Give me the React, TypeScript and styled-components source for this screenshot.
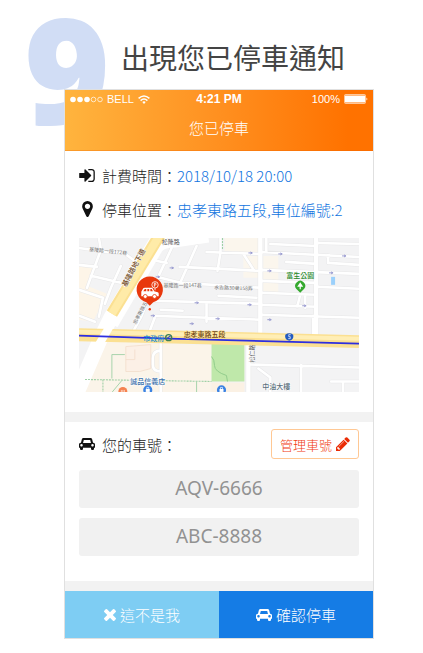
import React from "react";
import styled, { createGlobalStyle } from "styled-components";

const cjk = `"Noto Sans CJK TC", sans-serif`;
const latin = `"Noto Sans", "Noto Sans CJK TC", sans-serif`;

const GlobalStyle = createGlobalStyle`
  *, *::before, *::after { box-sizing: border-box; }
  body { margin: 0; background: #fff; color: #222; font-family: ${cjk}; font-weight: 300; }
  button { font-family: inherit; font-weight: inherit; cursor: pointer; }
`;

const Page = styled.main`
  padding: 0 49px 14px 64px;
`;

const Intro = styled.header`
  position: relative;
  display: flex;
  align-items: flex-end;
  height: 89px;
  padding: 0 0 11px 57px;
`;

const StepNumber = styled.span`
  position: absolute;
  left: -40px;
  top: -4px;
  font: 800 147px/145px "Open Sans", sans-serif;
  color: #d1ddf5;
`;

const Title = styled.h1`
  position: relative;
  margin: 0;
  font-size: 28px;
  line-height: 42px;
  font-weight: 400;
  color: #444;
  white-space: nowrap;
`;

const Phone = styled.section`
  position: relative;
  border: 1px solid #e0e0e0;
  background: #fff;
`;

const TopBar = styled.div`
  height: 61px;
  color: #fff;
  background: linear-gradient(90deg, #ffb43e, #ff9020 50%, #ff7200 92%);
  border-bottom: 1px solid rgba(240, 100, 0, 0.3);
`;

const StatusBar = styled.div`
  display: grid;
  grid-template-columns: 1fr auto 1fr;
  align-items: center;
  height: 18px;
  padding: 0 5px;
  font: 11px/18px "Liberation Sans", sans-serif;
`;

const StatusGroup = styled.div<{ $end?: boolean }>`
  display: flex;
  align-items: center;
  justify-content: ${(p) => (p.$end ? "flex-end" : "flex-start")};
  gap: 4px;
`;

const Clock = styled.time`
  font-size: 12px;
  font-weight: 700;
`;

const BarTitle = styled.h2`
  margin: 0;
  padding-top: 8px;
  font-size: 15px;
  line-height: 24px;
  font-weight: inherit;
  text-align: center;
`;

const Details = styled.div`
  padding: 7px 14px 20px;
`;

const InfoList = styled.dl`
  margin: 0 0 12px;
`;

const InfoRow = styled.div`
  display: flex;
  align-items: center;
  height: 34px;
  font-size: 15px;
  white-space: nowrap;
`;

const IconSlot = styled.span`
  display: flex;
  justify-content: center;
  width: 16px;
  margin-right: 7px;
  color: #111;
`;

const Label = styled.dt``;

const Value = styled.dd`
  margin: 0;
  color: #0f74e0;
`;

const MapView = styled.svg`
  display: block;
  width: 100%;
  height: auto;
  font-family: ${cjk};
`;

const Divider = styled.div`
  height: 10px;
  background: #f2f2f2;
`;

const Vehicles = styled.div`
  padding: 7px 14px 25px;
`;

const VehicleHead = styled.div`
  display: flex;
  align-items: center;
  margin-bottom: 11px;
`;

const VehicleTitle = styled.h3`
  flex: 1;
  margin: 0;
  font-size: 15px;
  font-weight: inherit;
`;

const ManageButton = styled.button`
  display: flex;
  align-items: center;
  gap: 4px;
  height: 30px;
  padding: 0 8px;
  border: 1px solid #ffc894;
  border-radius: 3px;
  background: #fff;
  color: #f03a10;
  font-size: 13px;
`;

const PlateList = styled.div`
  display: grid;
  gap: 10px;
`;

const Plate = styled.button`
  height: 38px;
  padding: 0 0 2px;
  border: 0;
  border-radius: 3px;
  background: #f1f1f1;
  color: #929292;
  font-size: 19px;
  line-height: 24px;
  font-weight: 400;
  font-family: ${latin};
`;

const Actions = styled.div`
  display: grid;
  grid-template-columns: 1fr 1fr;
`;

const ActionButton = styled.button<{ $primary?: boolean }>`
  display: flex;
  align-items: center;
  justify-content: center;
  gap: 4px;
  height: 47px;
  padding: 0;
  border: 0;
  background: ${(p) => (p.$primary ? "#157ce5" : "#7ecdf3")};
  color: #fff;
  font-size: 15px;
`;

const icons = {
  signIn: {
    box: "128 256 1536 1280",
    w: 16,
    h: 13,
    d: "M1312 896q0 26-19 45l-544 544q-19 19-45 19t-45-19-19-45v-288h-448q-26 0-45-19t-19-45v-384q0-26 19-45t45-19h448v-288q0-26 19-45t45-19 45 19l544 544q19 19 19 45zm352-352v704q0 119-84.500 203.500t-203.500 84.500h-320q-13 0-22.500-9.500t-9.500-22.500q0-4-1-20t-.5-26.500 3-23.500 10-19.500 20.500-6.500h320q66 0 113-47t47-113v-704q0-66-47-113t-113-47h-312l-11.500-1-11.500-3-8-5.500-7-9-2-13.500q0-4-1-20t-.5-26.500 3-23.500 10-19.500 20.500-6.500h320q119 0 203.500 84.500t84.500 203.500z",
  },
  marker: {
    box: "384 128 1024 1536",
    w: 11,
    h: 16,
    d: "M1152 640q0-106-75-181t-181-75-181 75-75 181 75 181 181 75 181-75 75-181zm256 0q0 109-33 179l-364 774q-16 33-47.500 52t-67.500 19-67.500-19-46.500-52l-365-774q-33-70-33-179 0-212 150-362t362-150 362 150 150 362z",
  },
  car: {
    box: "0 0 2048 1536",
    w: 16,
    h: 12,
    d: "M480 928q0-66-47-113t-113-47-113 47-47 113 47 113 113 47 113-47 47-113zm36-288h1016l-89-357q-2-8-14-17.5t-21-9.500h-768q-9 0-21 9.500t-14 17.500zm1372 288q0-66-47-113t-113-47-113 47-47 113 47 113 113 47 113-47 47-113zm160-96v384q0 14-9 23t-23 9h-96v128q0 80-56 136t-136 56-136-56-56-136v-128h-1024v128q0 80-56 136t-136 56-136-56-56-136v-128h-96q-14 0-23-9t-9-23v-384q0-93 65.500-158.500t158.500-65.500h28l105-419q23-94 104-157.500t179-63.500h768q98 0 179 63.500t104 157.500l105 419h28q93 0 158.500 65.500t65.500 158.500z",
  },
  pencil: {
    box: "128 128 1536 1536",
    w: 14,
    h: 14,
    d: "M491 1536l91-91-235-235-91 91v107h128v128h107zm523-928q0-22-22-22-10 0-17 7l-542 542q-7 7-7 17 0 22 22 22 10 0 17-7l542-542q7-7 7-17zm-54-192l416 416-832 832h-416v-416zm683 96q0 53-37 90l-166 166-416-416 166-165q36-38 90-38 53 0 91 38l235 234q37 39 37 91z",
  },
  times: {
    box: "302 366 1188 1188",
    w: 12,
    h: 12,
    d: "M1490 1322q0 40-28 68l-136 136q-28 28-68 28t-68-28l-294-294-294 294q-28 28-68 28t-68-28l-136-136q-28-28-28-68t28-68l294-294-294-294q-28-28-28-68t28-68l136-136q28-28 68-28t68 28l294 294 294-294q28-28 68-28t68 28l136 136q28 28 28 68t-28 68l-294 294 294 294q28 28 28 68z",
  },
};

function Icon({ name, color = "currentColor" }: { name: keyof typeof icons; color?: string }) {
  const icon = icons[name];
  return (
    <svg width={icon.w} height={icon.h} viewBox={icon.box} fill={color} aria-hidden="true">
      <path d={icon.d} />
    </svg>
  );
}

function SignalDots() {
  return (
    <svg width="33" height="7" viewBox="0 0 33 7" aria-hidden="true">
      {[3, 10, 17].map((x) => (
        <circle key={x} cx={x} cy="3.5" r="2.8" fill="#fff" />
      ))}
      {[23.5, 30].map((x) => (
        <circle key={x} cx={x} cy="3.5" r="2.3" fill="none" stroke="#fff" strokeWidth="0.7" />
      ))}
    </svg>
  );
}

function Wifi() {
  return (
    <svg width="12" height="9" viewBox="0 0 12 9" fill="none" stroke="#fff" strokeWidth="1.5" aria-hidden="true">
      <path d="M0.6 3.4Q6-1.400 11.400 3.400M2.600 5.600Q6 2.400 9.400 5.600" />
      <path d="M4.300 7L6 8.900L7.700 7Q6 5.700 4.300 7Z" fill="#fff" stroke="none" />
    </svg>
  );
}

function Battery() {
  return (
    <svg width="24" height="10" viewBox="0 0 24 10" aria-hidden="true">
      <rect x="0.5" y="0.5" width="21" height="9" rx="1" fill="none" stroke="#fff" strokeOpacity="0.6" />
      <rect x="1" y="1.500" width="20" height="7" fill="#fff" />
      <path d="M22.500 3.500Q24.200 5 22.500 6.500Z" fill="#fff" />
    </svg>
  );
}

const minorStreets = [
  "M0 10L28 14L45 15L56 23",
  "M20 0L22 12L16 28L8 50",
  "M0 27L18 29M12 38L42 45M42 28L32 50L26 66",
  "M0 52L24 60L20 79M0 78L16 84",
  "M93 10L79 40L62 80L52 98",
  "M78 39L102 45L182 50",
  "M118 8L102 44M74 22L88 25",
  "M74 63L182 66M82 72L104 73",
  "M74 78L182 82",
  "M101 29L182 33M142 0V14L139 33",
  "M128 14L182 16M165 16L176 33",
  "M140 58L178 60",
  "M128 66V84M76 80L71 93",
  "M182 14L281 19",
  "M188 0V14M192 6L238 8M238 5L281 6",
  "M182 32L281 36M208 24L238 26",
  "M182 43L238 45M182 55L238 57",
  "M182 67L238 69M182 77L281 80",
  "M238 49L281 51M250 17V25L281 27",
  "M222 57L219 69M227 57V70",
  "M235 78V98",
  "M171 127L281 130",
  "M223 128V155M253 144H281M265 145V155",
  "M180 131L192 140L192 155",
  "M82 106V155M82 113Q74 113 74 121V127Q74 134 82 134",
];

const mainStreets = ["M182 0V95", "M238 0V96", "M170 104V155"];

const oneWayArrows = [
  [93, 30], [118, 65], [172, 15], [202, 16], [191, 33], [266, 18], [253, 35],
  [226, 68], [171, 67], [74, 78], [113, 86], [139, 81], [191, 82], [79, 39],
];

function StreetMap() {
  return (
    <MapView viewBox="0 0 281 155" role="img" aria-label="停車位置地圖">
      <rect width="281" height="155" fill="#f3f3f4" />
      <path d="M0 26L15 30L8 48L28 56L14 84L0 82Z" fill="#fdf5e8" />
      <path d="M146 0H180V14H146ZM165 18H180V40H165ZM185 18H200V55H185Z" fill="#fbf6ed" />
      <path d="M26 104L133 108V155H3L14 134Z" fill="#fbf4e9" />
      <path d="M133 105L166 106V144H133Z" fill="#bfe8aa" />
      <path d="M133 119Q136 122 136 128T148 138L149 144" fill="none" stroke="#92cc8c" />
      <path d="M133 145H166V155H133Z" fill="#fbf1e4" />

      <g fill="none" strokeLinecap="round" strokeLinejoin="round">
        <path d={minorStreets.join("")} stroke="#e7e7e8" strokeWidth="3.600" />
        <path d={mainStreets.join("")} stroke="#e7e7e8" strokeWidth="5.400" />
        <path d={minorStreets.join("")} stroke="#fff" strokeWidth="2.600" />
        <path d={mainStreets.join("")} stroke="#fff" strokeWidth="4.400" />
      </g>

      <g fill="none">
        <path d="M77 13Q82 5 96 5L130 0" stroke="#fff" strokeWidth="9" />
        <path d="M83 8L36 88" stroke="#fff" strokeWidth="6" />
        <path d="M82 -4L32 80L22 100L-4 160" stroke="#fff" strokeWidth="15" />
        <path d="M0 97L281 104" stroke="#fbe092" strokeWidth="13" />
        <path d="M0 94L281 101" stroke="#ffeeb5" strokeWidth="4" />
        <path d="M33 85L17 112" stroke="#fff" strokeWidth="8" />
        <path d="M81 -3L33 76" stroke="#fbe092" strokeWidth="12" />
        <path d="M81 -3L33 76" stroke="#ffeba8" strokeWidth="8" />
        <path d="M0 98L90 101L281 106" stroke="#2d2ee0" strokeWidth="1.600" />
      </g>

      <path d="M47 109L72 107V131L61 134H47ZM56 112V122H47" fill="#fcf0e6" stroke="#f3ddcc" strokeWidth="0.800" />
      <g fill="none" stroke="#9fd0a6">
        <path d="M46 117H33V141M43 143L33 155M118 144V155" strokeWidth="0.900" />
        <path d="M6 142L133 144M24 142V155M144 0V12" strokeWidth="1.100" strokeDasharray="2 1" />
      </g>

      <g fill="none" stroke="#8f91cc" strokeWidth="0.900">
        {oneWayArrows.map(([x, y]) => (
          <path key={`${x}-${y}`} d={`M${x - 2} ${y}H${x + 1}M${x} ${y - 1}L${x + 2} ${y}L${x} ${y + 1}`} />
        ))}
      </g>

      <rect x="253" y="39" width="4" height="8" fill="#9bd0fb" />

      <g textAnchor="middle" fontSize="5" fontWeight="400" fill="#777">
        <text x="29" y="15" transform="rotate(6 29 15)">基隆路一段172巷</text>
        <text x="104" y="49">基隆路一段147巷</text>
        <text x="155" y="52" transform="rotate(2 155 52)">永吉路30巷158弄</text>
        <text x="63" y="76" transform="rotate(-62 63 76)">忠孝東路五</text>
        <text x="92" y="6" fontSize="6" fill="#555">松隆路</text>
        <text x="176" y="116" fontSize="6" transform="rotate(-90 176 116)" fill="#666">松仁路</text>
      </g>
      <g textAnchor="middle" fontSize="7" fontWeight="500" stroke="#fff" strokeWidth="1" paintOrder="stroke">
        <text x="57" y="31" transform="rotate(-62 57 31)" fill="#70491c">基隆路地下道</text>
        <text x="126" y="99" fill="#70491c" stroke="#fbe092">忠孝東路五段</text>
        <text x="75" y="103" fill="#1c91d3" stroke="none">市政府</text>
        <text x="222" y="40" fill="#27872a">富生公園</text>
        <text x="69" y="147" fill="#3b6fa8">誠品信義店</text>
        <text x="198" y="152" fill="#5d7280">中油大樓</text>
      </g>

      <circle cx="90" cy="100" r="3" fill="none" stroke="#3c7f54" strokeWidth="1.400" />
      <path d="M88 101L92 98" stroke="#2558b5" strokeWidth="1.200" />
      <path d="M207 97Q211 94 215 97Q216 102 211 103Q206 102 207 97Z" fill="#235bc0" />
      <path d="M210.500 97H212.500M210.500 97V99H212V101H210" fill="none" stroke="#fff" strokeWidth="0.700" />

      <path d="M222 55L218 51A5 5 0 1 1 226 51Z" fill="#35a92f" />
      <path d="M222 44.500L225 49H222.600V51.500H221.400V49H219Z" fill="#fff" />

      <circle cx="44" cy="154" r="4.500" fill="#f58250" />
      <path d="M42.500 155V152.500M44 155V152.500M45.500 155V152.500" stroke="#fff" strokeWidth="0.600" />
      {[69, 143].map((x) => (
        <g key={x}>
          <circle cx={x} cy="152.500" r="4.600" fill="#3b82e2" />
          <path d={`M${x - 2} 151.500H${x + 2}V154.500H${x - 2}Z`} fill="#fff" />
          <path d={`M${x - 1} 151.500V150H${x + 1}V151.500`} fill="none" stroke="#fff" strokeWidth="0.700" />
        </g>
      ))}

      <path d="M71 68L67.500 64.500A13.200 13.200 0 1 1 74.500 64.500Z" fill="#e8380d" />
      <circle cx="71" cy="71.500" r="1.200" fill="#e8380d" />
      <path
        d="M62.500 58V54L64.500 50.500Q65 50 66 50H73.500L75.500 53.500L79 54.500Q80 55 80 56V58.500H62.500Z"
        fill="#fff"
      />
      <path d="M64.500 53.500L66 51.300H67.500V53.500ZM68.600 51.300H70.500V53.500H68.600ZM71.600 51.300H73L74.200 53.500H71.600Z" fill="#e8380d" />
      <circle cx="66.500" cy="58.700" r="2" fill="#fff" stroke="#e8380d" strokeWidth="0.800" />
      <circle cx="75.800" cy="58.700" r="2" fill="#fff" stroke="#e8380d" strokeWidth="0.800" />
      <circle cx="76.300" cy="47" r="3.200" fill="none" stroke="#fff" strokeWidth="0.800" />
      <path d="M75.600 49V45.300H76.700Q78 46.300 76.700 47.300H75.600M76.300 50.200V52.500" fill="none" stroke="#fff" strokeWidth="0.800" />
    </MapView>
  );
}

export default function App() {
  return (
    <>
      <GlobalStyle />
      <Page>
        <Intro>
          <StepNumber>9</StepNumber>
          <Title>出現您已停車通知</Title>
        </Intro>
        <Phone>
          <TopBar>
            <StatusBar>
              <StatusGroup>
                <SignalDots />
                <span>BELL</span>
                <Wifi />
              </StatusGroup>
              <Clock>4:21 PM</Clock>
              <StatusGroup $end>
                <span>100%</span>
                <Battery />
              </StatusGroup>
            </StatusBar>
            <BarTitle>您已停車</BarTitle>
          </TopBar>
          <Details>
            <InfoList>
              <InfoRow>
                <IconSlot><Icon name="signIn" /></IconSlot>
                <Label>計費時間：</Label>
                <Value>2018/10/18 20:00</Value>
              </InfoRow>
              <InfoRow>
                <IconSlot><Icon name="marker" /></IconSlot>
                <Label>停車位置：</Label>
                <Value>忠孝東路五段,車位編號:2</Value>
              </InfoRow>
            </InfoList>
            <StreetMap />
          </Details>
          <Divider />
          <Vehicles>
            <VehicleHead>
              <IconSlot><Icon name="car" /></IconSlot>
              <VehicleTitle>您的車號：</VehicleTitle>
              <ManageButton type="button">
                管理車號
                <Icon name="pencil" color="#ea2c06" />
              </ManageButton>
            </VehicleHead>
            <PlateList>
              <Plate type="button">AQV-6666</Plate>
              <Plate type="button">ABC-8888</Plate>
            </PlateList>
          </Vehicles>
          <Divider />
          <Actions>
            <ActionButton type="button">
              <Icon name="times" />
              這不是我
            </ActionButton>
            <ActionButton type="button" $primary>
              <Icon name="car" />
              確認停車
            </ActionButton>
          </Actions>
        </Phone>
      </Page>
    </>
  );
}
